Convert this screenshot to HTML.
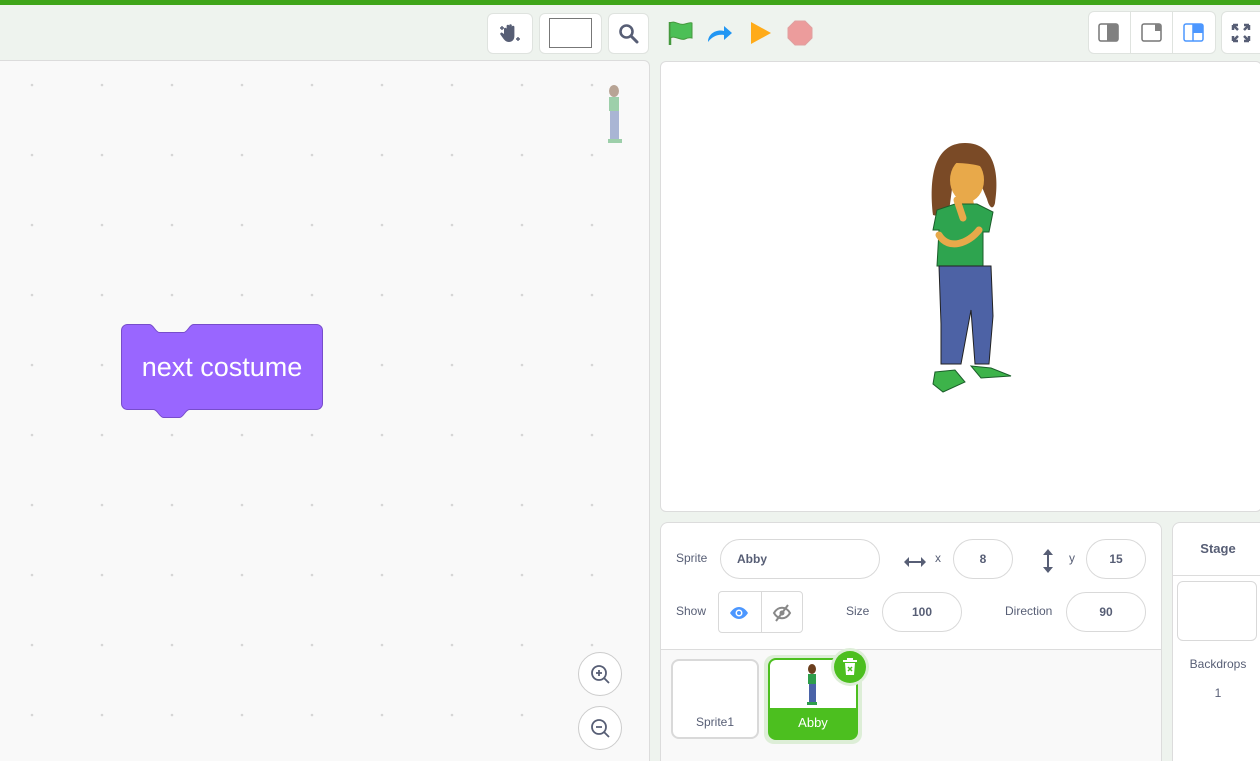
<!DOCTYPE html>
<html style="overflow:hidden;width:1260px;height:761px"><head><meta charset="utf-8"><style>
*{box-sizing:border-box;margin:0;padding:0}
body{width:1260px;height:761px;overflow:hidden;background:#eef3ee;font-family:"Liberation Sans",sans-serif;position:relative;color:#575e75}
.abs{position:absolute}
.btn{position:absolute;background:#fff;border:1px solid #dfe3df;border-radius:6px}
.pill{position:absolute;background:#fff;border:1px solid #d9d9d9;border-radius:20px;font-size:12px;font-weight:bold;text-align:center;line-height:38px;color:#575e75}
.lbl{position:absolute;font-size:12px;color:#575e75}
</style></head><body>
<div class="abs" style="left:0;top:0;width:1260px;height:5px;background:#3fa519"></div>
<!-- toolbar -->
<div class="btn" style="left:487px;top:13px;width:46px;height:41px"></div>
<svg class="abs" style="left:497px;top:22px" width="26" height="24" viewBox="0 0 26 24"><path d="M7 12V7a1.3 1.3 0 0 1 2.6 0v4V4a1.3 1.3 0 0 1 2.6 0v7V3.5a1.3 1.3 0 0 1 2.6 0V11V5a1.3 1.3 0 0 1 2.6 0v9c0 4-2.5 6-5.5 6s-4.5-2-6-4l-2.5-3.5a1.3 1.3 0 0 1 2-1.6z" fill="#575e75"/><path d="M3 6h4M5 4v4M19 17h4M21 15v4" stroke="#575e75" stroke-width="1.4"/></svg>
<div class="btn" style="left:539px;top:13px;width:63px;height:41px"></div>
<div class="abs" style="left:549px;top:18px;width:43px;height:30px;border:1px solid #777;background:#fff"></div>
<div class="btn" style="left:608px;top:13px;width:41px;height:41px"></div>
<svg class="abs" style="left:617px;top:22px" width="24" height="24"><circle cx="9.5" cy="9.5" r="6" fill="none" stroke="#575e75" stroke-width="2.6"/><path d="M14 14l6 6" stroke="#575e75" stroke-width="3" stroke-linecap="round"/></svg>
<svg class="abs" style="left:667px;top:19px" width="28" height="28"><path d="M3 3v23" stroke="#45993d" stroke-width="2.5"/><path d="M3 4c5-3 9 3 15 1s7-1 7-1v15s-3-1-7 1-10-4-15-1z" fill="#4cbf56" stroke="#45993d" stroke-width="1"/></svg>
<svg class="abs" style="left:706px;top:22px" width="28" height="22"><path d="M2 20c0-8 8-13 16-11V4l8 7-8 7v-5c-7-1-12 2-16 7z" fill="#2196f3"/></svg>
<svg class="abs" style="left:749px;top:20px" width="24" height="26"><path d="M2 2l20 11L2 24z" fill="#ffab19"/></svg>
<svg class="abs" style="left:787px;top:20px" width="26" height="26"><path d="M8 1h10l7 7v10l-7 7H8l-7-7V8z" fill="#ec9c9c" stroke="#e0a0a0"/></svg>
<div class="btn" style="left:1088px;top:11px;width:128px;height:43px"></div>
<div class="abs" style="left:1130px;top:12px;width:1px;height:41px;background:#dfe3df"></div>
<div class="abs" style="left:1172px;top:12px;width:1px;height:41px;background:#dfe3df"></div>
<svg class="abs" style="left:1098px;top:23px" width="22" height="20"><rect x="1" y="1" width="19" height="17" rx="2" fill="#fff" stroke="#777" stroke-width="1.5"/><rect x="9" y="1" width="11" height="17" fill="#808080"/></svg>
<svg class="abs" style="left:1141px;top:23px" width="22" height="20"><rect x="1" y="1" width="19" height="17" rx="2" fill="#fff" stroke="#777" stroke-width="1.5"/><rect x="14" y="1" width="6" height="7" fill="#808080"/></svg>
<svg class="abs" style="left:1183px;top:23px" width="22" height="20"><rect x="1" y="1" width="19" height="17" rx="2" fill="#fff" stroke="#4c97ff" stroke-width="1.5"/><rect x="10" y="1" width="10" height="9" fill="#4c97ff"/><path d="M10 1v17" stroke="#4c97ff" stroke-width="1.5"/></svg>
<div class="btn" style="left:1221px;top:11px;width:45px;height:43px"></div>
<svg class="abs" style="left:1231px;top:23px" width="20" height="20"><path d="M2 2l5 5M2 2h5M2 2v5M18 2l-5 5M18 2h-5M18 2v5M2 18l5-5M2 18h5M2 18v-5M18 18l-5-5M18 18h-5M18 18v-5" stroke="#575e75" stroke-width="2.5"/></svg>
<!-- code area -->
<div class="abs" style="left:-10px;top:60px;width:660px;height:720px;background:#f9f9f9;border:1px solid #dcdcdc;border-radius:6px;overflow:hidden">
<svg width="660" height="720" style="position:absolute;left:0;top:0">
<defs><pattern id="d" x="10" y="-1" width="70" height="70" patternUnits="userSpaceOnUse"><circle cx="31" cy="25" r="1.3" fill="#d6d6d6"/></pattern></defs>
<rect width="660" height="720" fill="url(#d)"/>
</svg>
</div>
<svg class="abs" style="left:120px;top:323px" width="205" height="102"><path d="M1.5 7.5a6 6 0 0 1 6-6h22c4 0 6 8 10 8h24c4 0 6-8 10-8h123a6 6 0 0 1 6 6v73a6 6 0 0 1-6 6H69.5c-4 0-6 8-10 8h-16c-4 0-6-8-10-8h-26a6 6 0 0 1-6-6z" fill="#9966ff" stroke="#774dcb" stroke-width="1"/><text x="102" y="53" font-family="Liberation Sans" font-size="27" fill="#fff" text-anchor="middle">next costume</text></svg>
<!-- mini sprite -->
<svg class="abs" style="left:603px;top:84px;opacity:.45" width="24" height="62"><ellipse cx="11" cy="7" rx="5" ry="6" fill="#6b3f1e"/><rect x="6" y="13" width="10" height="14" fill="#2e9e4b"/><rect x="7" y="27" width="9" height="28" fill="#4a63a8"/><rect x="5" y="55" width="14" height="4" fill="#2e9e4b"/></svg>
<div class="btn" style="left:578px;top:652px;width:44px;height:44px;border-radius:50%;border-color:#ccc"></div>
<svg class="abs" style="left:589px;top:663px" width="22" height="22"><circle cx="10" cy="10" r="7" fill="none" stroke="#575e75" stroke-width="1.8"/><path d="M15 15l5 5M7 10h6M10 7v6" stroke="#575e75" stroke-width="1.8"/></svg>
<div class="btn" style="left:578px;top:706px;width:44px;height:44px;border-radius:50%;border-color:#ccc"></div>
<svg class="abs" style="left:589px;top:717px" width="22" height="22"><circle cx="10" cy="10" r="7" fill="none" stroke="#575e75" stroke-width="1.8"/><path d="M15 15l5 5M7 10h6" stroke="#575e75" stroke-width="1.8"/></svg>
<!-- stage -->
<div class="abs" style="left:660px;top:61px;width:602px;height:451px;background:#fff;border:1px solid #dcdcdc;border-radius:6px"></div>
<svg class="abs" style="left:925px;top:140px" width="95" height="258" viewBox="0 0 95 258">
<path d="M8 75c-4-35 0-72 32-72s34 35 30 60c-2 8-6 4-8-4l-5-12-30 2-4 30z" fill="#7a4a26"/>
<ellipse cx="42" cy="40" rx="17" ry="22" fill="#e8a94a"/>
<path d="M22 22c8-14 36-14 42 8-14-8-28-6-42-8z" fill="#7a4a26"/>
<path d="M34 60h14l2 8h-16z" fill="#e8a94a"/>
<path d="M12 70l18-6h22l16 8-4 20-6 0 0 34-46 0 2-36-6 0z" fill="#2ea44f" stroke="#1b5e2a" stroke-width="1"/>
<path d="M32 60l6 18M14 95c10 16 30 8 40-5" stroke="#e8a94a" stroke-width="7" fill="none" stroke-linecap="round"/>
<path d="M14 126h52l2 50-4 48-14 0-4-54-10 54-20 0 0-40z" fill="#4d62a5" stroke="#222" stroke-width="1"/>
<path d="M10 232l20-2 10 12-22 10-10-8z" fill="#3db34a" stroke="#1b5e2a" stroke-width="1"/>
<path d="M46 226l20 2 20 8-30 2z" fill="#3db34a" stroke="#1b5e2a" stroke-width="1"/>
</svg>
<!-- sprite pane -->
<div class="abs" style="left:660px;top:522px;width:502px;height:260px;background:#fff;border:1px solid #dcdcdc;border-radius:8px;overflow:hidden"><div style="position:absolute;left:0;top:126px;width:502px;height:140px;background:#f9f9f9;border-top:1px solid #dcdcdc"></div></div>
<div class="lbl" style="left:676px;top:551px">Sprite</div>
<div class="pill" style="left:720px;top:539px;width:160px;text-align:left;padding-left:16px">Abby</div>
<svg class="abs" style="left:903px;top:555px" width="24" height="14"><path d="M3 7h18" stroke="#575e75" stroke-width="2"/><path d="M1 7l5-5v10zM23 7l-5-5v10z" fill="#575e75"/></svg>
<div class="lbl" style="left:935px;top:551px">x</div>
<div class="pill" style="left:953px;top:539px;width:60px">8</div>
<svg class="abs" style="left:1041px;top:548px" width="14" height="26"><path d="M7 3v20" stroke="#575e75" stroke-width="2"/><path d="M7 1l-5 6h10zM7 25l-5-6h10z" fill="#575e75"/></svg>
<div class="lbl" style="left:1069px;top:551px">y</div>
<div class="pill" style="left:1086px;top:539px;width:60px">15</div>
<div class="lbl" style="left:676px;top:604px">Show</div>
<div class="abs" style="left:718px;top:591px;width:85px;height:42px;border:1px solid #d9d9d9;border-radius:4px;background:#fff"></div>
<div class="abs" style="left:761px;top:592px;width:1px;height:40px;background:#d9d9d9"></div>
<svg class="abs" style="left:729px;top:605px" width="20" height="16"><path d="M1 8c5-8 13-8 18 0-5 8-13 8-18 0z" fill="#4c97ff"/><circle cx="10" cy="8" r="3.5" fill="#fff"/><circle cx="10" cy="8" r="2" fill="#4c97ff"/></svg>
<svg class="abs" style="left:772px;top:604px" width="20" height="18"><path d="M2 9c4-7 12-7 16 0-4 7-12 7-16 0z" fill="none" stroke="#888" stroke-width="2"/><circle cx="10" cy="9" r="2.5" fill="#888"/><path d="M16 1L4 17" stroke="#888" stroke-width="2"/></svg>
<div class="lbl" style="left:846px;top:604px">Size</div>
<div class="pill" style="left:882px;top:592px;width:80px">100</div>
<div class="lbl" style="left:1005px;top:604px">Direction</div>
<div class="pill" style="left:1066px;top:592px;width:80px">90</div>
<div class="abs" style="left:671px;top:659px;width:88px;height:80px;background:#fff;border:2px solid #d9d9d9;border-radius:8px"></div>
<div class="lbl" style="left:671px;top:715px;width:88px;text-align:center">Sprite1</div>
<div class="abs" style="left:764px;top:655px;width:98px;height:89px;background:#ddeed7;border-radius:10px"></div>
<div class="abs" style="left:768px;top:658px;width:90px;height:82px;background:#4cbf1f;border:2px solid #4cbf1f;border-radius:8px;overflow:hidden"><div style="background:#fff;height:48px"></div></div>
<svg class="abs" style="left:805px;top:664px;" width="14" height="42"><ellipse cx="7" cy="5" rx="4" ry="5" fill="#6b3f1e"/><rect x="3" y="10" width="8" height="10" fill="#2e9e4b"/><rect x="4" y="20" width="7" height="18" fill="#4a63a8"/><rect x="2" y="38" width="10" height="3" fill="#2e9e4b"/></svg>
<div class="lbl" style="left:768px;top:715px;width:90px;text-align:center;color:#fff;font-size:13px">Abby</div>
<div class="abs" style="left:831px;top:648px;width:38px;height:38px;border-radius:50%;background:#ddeed7"></div>
<div class="abs" style="left:834px;top:651px;width:32px;height:32px;border-radius:50%;background:#4cbf1f"></div>
<svg class="abs" style="left:842px;top:657px" width="16" height="20"><path d="M1 4h14M6 4V2h4v2" stroke="#fff" stroke-width="2" fill="none"/><path d="M3 6h10l-1 12H4z" fill="#fff"/><path d="M6 10l4 4M10 10l-4 4" stroke="#4cbf1f" stroke-width="1.5"/></svg>
<!-- stage pane -->
<div class="abs" style="left:1172px;top:522px;width:100px;height:260px;background:#fff;border:1px solid #dcdcdc;border-radius:8px"></div>
<div class="abs" style="left:1173px;top:575px;width:90px;height:1px;background:#dcdcdc"></div>
<div class="lbl" style="left:1172px;top:541px;width:92px;text-align:center;font-weight:bold;font-size:13px">Stage</div>
<div class="abs" style="left:1177px;top:581px;width:80px;height:60px;border:1px solid #d9d9d9;border-radius:6px;background:#fff"></div>
<div class="lbl" style="left:1172px;top:657px;width:92px;text-align:center">Backdrops</div>
<div class="lbl" style="left:1172px;top:686px;width:92px;text-align:center">1</div>
</body></html>
